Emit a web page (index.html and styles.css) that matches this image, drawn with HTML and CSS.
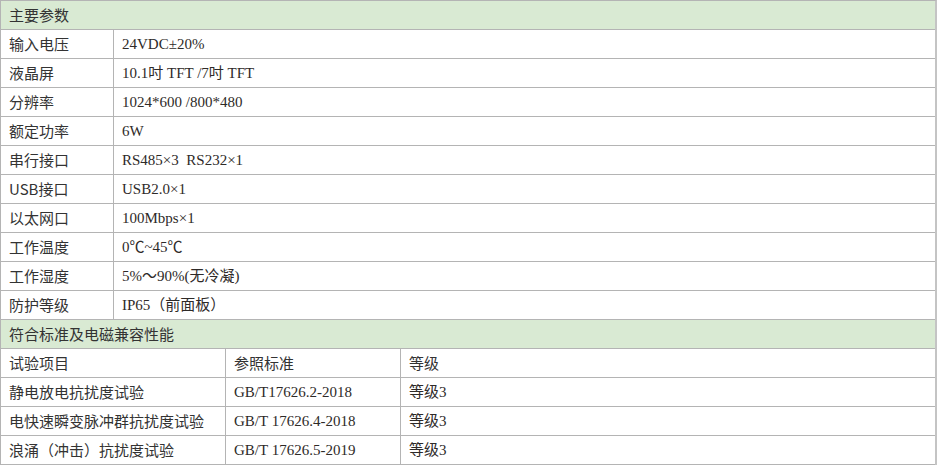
FILE: index.html
```html
<!DOCTYPE html>
<html lang="zh-CN">
<head>
<meta charset="utf-8">
<title>主要参数</title>
<link rel="stylesheet" href="styles.css">
</head>
<body>
<table class="spec">
  <colgroup>
    <col class="c1">
    <col class="c2">
    <col class="c3">
    <col class="c4">
  </colgroup>
  <tbody>
    <tr class="head"><td colspan="4">主要参数</td></tr>
    <tr><td class="label">输入电压</td><td class="val" colspan="3">24VDC±20%</td></tr>
    <tr><td class="label">液晶屏</td><td class="val" colspan="3">10.1吋 TFT /7吋 TFT</td></tr>
    <tr><td class="label">分辨率</td><td class="val" colspan="3">1024*600 /800*480</td></tr>
    <tr><td class="label">额定功率</td><td class="val" colspan="3">6W</td></tr>
    <tr><td class="label">串行接口</td><td class="val" colspan="3">RS485×3  RS232×1</td></tr>
    <tr><td class="label">USB接口</td><td class="val" colspan="3">USB2.0×1</td></tr>
    <tr><td class="label">以太网口</td><td class="val" colspan="3">100Mbps×1</td></tr>
    <tr><td class="label">工作温度</td><td class="val" colspan="3">0℃~45℃</td></tr>
    <tr><td class="label">工作湿度</td><td class="val" colspan="3">5%～90%(无冷凝)</td></tr>
    <tr><td class="label">防护等级</td><td class="val" colspan="3">IP65（前面板）</td></tr>
    <tr class="head"><td colspan="4">符合标准及电磁兼容性能</td></tr>
    <tr><td class="label" colspan="2">试验项目</td><td class="label">参照标准</td><td class="label">等级</td></tr>
    <tr><td class="label" colspan="2">静电放电抗扰度试验</td><td class="val">GB/T17626.2-2018</td><td class="val">等级3</td></tr>
    <tr><td class="label" colspan="2">电快速瞬变脉冲群抗扰度试验</td><td class="val">GB/T 17626.4-2018</td><td class="val">等级3</td></tr>
    <tr><td class="label" colspan="2">浪涌（冲击）抗扰度试验</td><td class="val">GB/T 17626.5-2019</td><td class="val">等级3</td></tr>
  </tbody>
</table>
</body>
</html>
```
FILE: styles.css
```css
html, body {
  margin: 0;
  padding: 0;
  background: #ffffff;
}

.spec {
  width: 937px;
  table-layout: fixed;
  border-spacing: 0;
  border-collapse: separate;
  border-top: 1px solid #b4b4b4;
  border-right: 2px solid #c4c4c4;
  box-sizing: border-box;
  font-family: "Noto Sans CJK SC", "Noto Sans", sans-serif;
  font-size: 15px;
  color: #333333;
}

.spec .c1 { width: 113px; }
.spec .c2 { width: 112px; }
.spec .c3 { width: 175px; }

.spec td {
  height: 28px;
  padding: 0 8px;
  line-height: 28px;
  border-left: 1px solid #b4b4b4;
  border-bottom: 1px solid #b4b4b4;
  white-space: pre;
  overflow: hidden;
  vertical-align: middle;
}

.spec .head td {
  background: #d9ead3;
}

.spec td.label {
  font-family: "Noto Sans CJK SC", "Noto Sans", sans-serif;
}

.spec td.val {
  font-family: "Liberation Serif", "Noto Sans CJK SC", serif;
  color: #2e2a28;
}
```
